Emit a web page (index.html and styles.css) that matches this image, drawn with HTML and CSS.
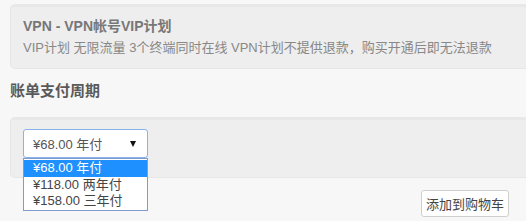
FILE: index.html
```html
<!DOCTYPE html>
<html lang="zh-CN">
<head>
<meta charset="utf-8">
<title>VPN</title>
<link rel="stylesheet" href="styles.css">
</head>
<body>
<div class="page">
  <div class="well product">
    <div class="product-name">VPN - VPN帐号VIP计划</div>
    <div class="product-desc">VIP计划 无限流量 3个终端同时在线 VPN计划不提供退款，购买开通后即无法退款</div>
  </div>
  <h3 class="section-title">账单支付周期</h3>
  <div class="well cycle">
    <div class="select-wrap">
      <div class="select">
        <span class="select-value">¥68.00 年付</span>
        <span class="select-arrow"></span>
      </div>
      <ul class="select-list">
        <li class="option selected">¥68.00 年付</li>
        <li class="option">¥118.00 两年付</li>
        <li class="option">¥158.00 三年付</li>
      </ul>
    </div>
  </div>
  <div class="actions">
    <button class="btn">添加到购物车</button>
  </div>
</div>
</body>
</html>
```
FILE: styles.css
```css
html, body {
  margin: 0;
  padding: 0;
  background: #f7f7f7;
}
body {
  font-family: "Liberation Sans", "Noto Sans CJK SC", sans-serif;
  font-size: 13px;
  color: #777;
}
.page {
  padding: 4px 0 0 10px;
}
.well {
  background: #eeeeee;
  border: 1px solid #e6e6e6;
  border-top: 3px solid #e8e8e8;
  border-radius: 5px;
  margin-right: -20px;
  box-sizing: border-box;
}
.product {
  height: 65px;
  padding: 9px 12px 0 12px;
}
.product-name {
  font-weight: bold;
  font-size: 14px;
  line-height: 21px;
  color: #777;
}
.product-desc {
  line-height: 21px;
  color: #888;
}
.section-title {
  margin: 11px 0 15px 0;
  font-size: 15px;
  line-height: 22px;
  font-weight: bold;
  color: #5a5a5a;
}
.cycle {
  height: 61px;
  padding: 9px 12px 0 12px;
}
.select-wrap {
  position: relative;
  width: 125px;
}
.select {
  box-sizing: border-box;
  height: 29px;
  border: 1px solid #8ab2ec;
  border-radius: 3px;
  background: #fff;
  display: flex;
  align-items: center;
  padding: 0 8px 0 9px;
  color: #555;
}
.select-value {
  flex: 1;
}
.select-arrow {
  width: 0;
  height: 0;
  border-left: 3.5px solid transparent;
  border-right: 3.5px solid transparent;
  border-top: 6px solid #111;
  margin-right: 3px;
}
.select-list {
  position: absolute;
  left: 0;
  top: 29px;
  width: 125px;
  box-sizing: border-box;
  margin: 0;
  padding: 1px 0 0 0;
  list-style: none;
  background: #fff;
  border: 1px solid #7f9bd0;
  z-index: 2;
}
.option {
  height: 16.5px;
  line-height: 16px;
  padding-left: 9px;
  color: #444;
  white-space: nowrap;
}
.option.selected {
  background: #1e90ff;
  color: #fff;
}
.actions {
  display: flex;
  justify-content: flex-end;
  padding: 12px 17px 0 0;
}
.btn {
  font-family: "Liberation Sans", "Noto Sans CJK SC", sans-serif;
  font-size: 13px;
  color: #444;
  background: #fff;
  border: 1px solid #cfcfcf;
  border-radius: 3px;
  height: 27px;
  width: 88px;
  padding: 0;
}
```
